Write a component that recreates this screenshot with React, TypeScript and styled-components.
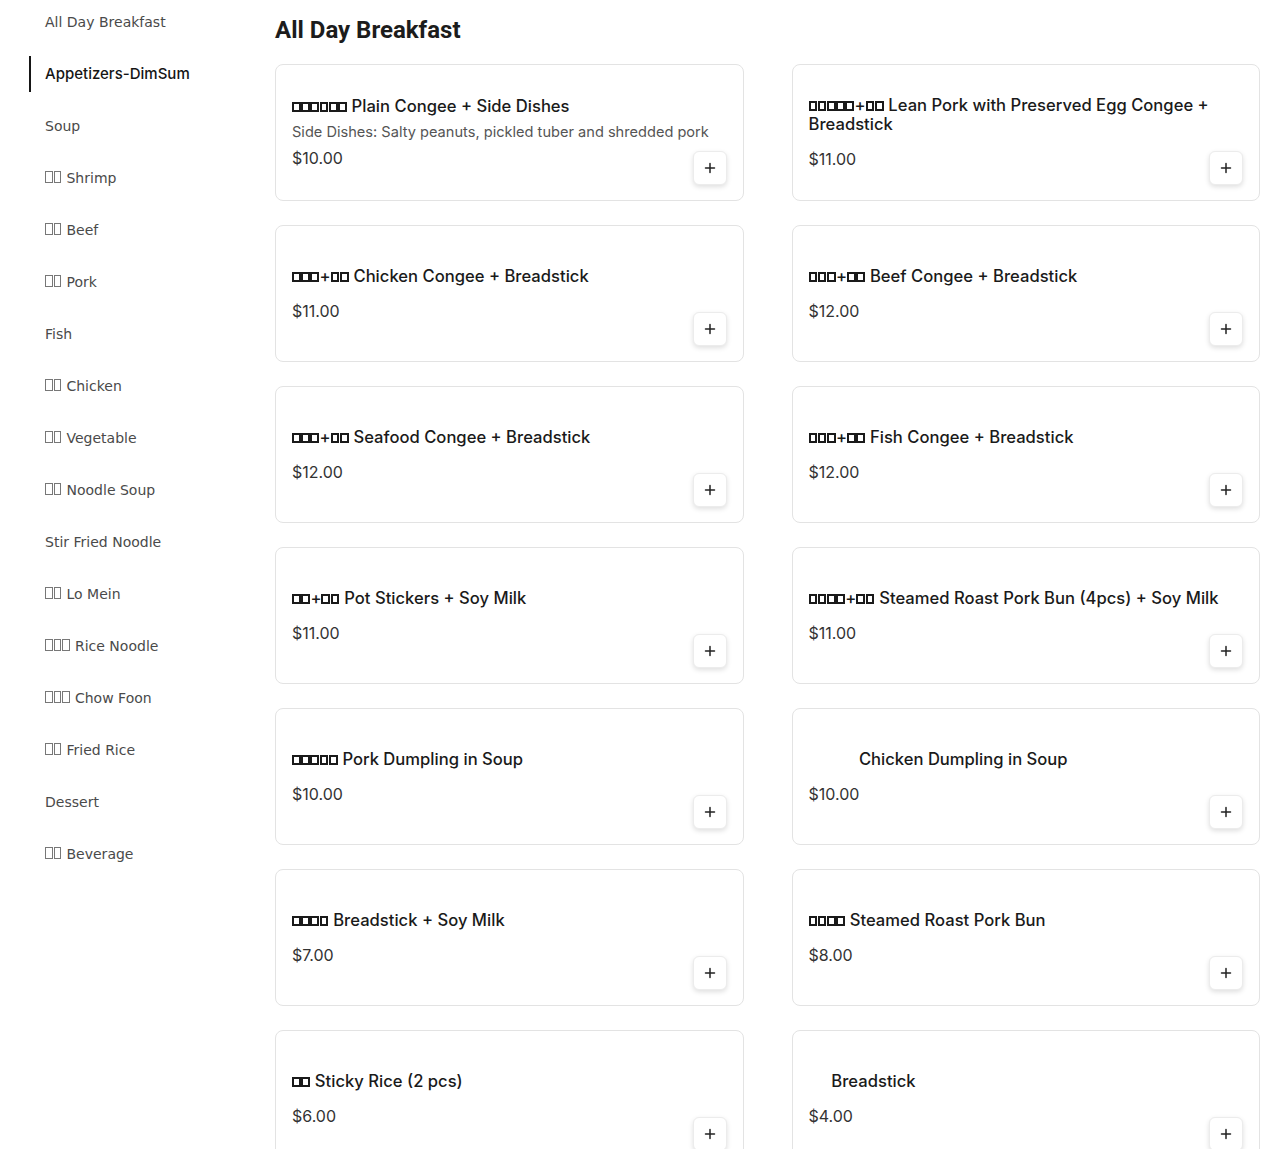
import React from "react";
import styled, { createGlobalStyle } from "styled-components";

const GlobalStyle = createGlobalStyle`
  html, body { margin: 0; padding: 0; background: #ffffff; }
  * { box-sizing: border-box; }
`;

const Page = styled.div`
  display: flex;
  align-items: flex-start;
  width: 1285px;
  min-height: 1149px;
`;

const Sidebar = styled.nav`
  width: 275px;
  flex: none;
  padding: 4px 0 0 29px;
  display: flex;
  flex-direction: column;
  gap: 16px;
`;

const NavItem = styled.a<{ $active?: boolean }>`
  display: block;
  height: 36px;
  padding: 0 0 0 14px;
  border-left: 2px solid ${(p) => (p.$active ? "#161616" : "transparent")};
  font-family: ${(p) => (p.$active ? `"Inter", "Noto Sans", sans-serif` : `"DejaVu Sans", sans-serif`)};
  font-size: ${(p) => (p.$active ? "15px" : "14px")};
  font-weight: ${(p) => (p.$active ? 500 : 400)};
  color: ${(p) => (p.$active ? "#151515" : "#4a4a4a")};
  line-height: 36px;
  text-decoration: none;
  white-space: nowrap;
  cursor: pointer;
`;

const Main = styled.main`
  flex: 1;
  padding-right: 25px;
`;

const Heading = styled.h2`
  margin: 16px 0 20px;
  font-family: "Roboto", "Liberation Sans", sans-serif;
  font-size: 24px;
  line-height: 28px;
  font-weight: 700;
  color: #1c1c1c;
`;

const Grid = styled.div`
  display: grid;
  grid-template-columns: 1fr 1fr;
  column-gap: 48px;
  row-gap: 24px;
`;

const Card = styled.div`
  position: relative;
  height: 137px;
  border: 1px solid #e3e3e3;
  border-radius: 8px;
  padding: 0 16px;
  display: flex;
  flex-direction: column;
  justify-content: center;
  background: #fff;
`;

const Title = styled.div`
  font-family: "Inter", "Noto Sans", sans-serif;
  font-size: 16.6px;
  font-weight: 500;
  line-height: 19px;
  color: #1a1a1a;
`;

const Desc = styled.div`
  margin-top: 6px;
  font-family: "Inter", "Noto Sans", sans-serif;
  font-size: 14.6px;
  line-height: 20px;
  font-weight: 400;
  color: #555;
  white-space: nowrap;
`;

const Price = styled.div<{ $tight?: boolean }>`
  margin-top: ${(p) => (p.$tight ? "6px" : "15px")};
  font-family: "Inter", "Noto Sans", sans-serif;
  font-size: 16px;
  line-height: 20px;
  font-weight: 400;
  color: #333;
`;

const AddButton = styled.button`
  position: absolute;
  right: 16px;
  bottom: 15px;
  width: 34px;
  height: 34px;
  padding: 0;
  border: 1px solid #ececec;
  border-radius: 6px;
  background: #fff;
  box-shadow: 0 2px 5px rgba(0, 0, 0, 0.13);
  display: flex;
  align-items: center;
  justify-content: center;
  cursor: pointer;
`;

const Tofu = styled.span<{ $kind: "bold" | "thin" | "blank" }>`
  display: inline-block;
  vertical-align: baseline;
  width: ${(p) => (p.$kind === "thin" ? "7.5px" : "8.8px")};
  height: ${(p) => (p.$kind === "thin" ? "12px" : "10px")};
  margin-right: ${(p) => (p.$kind === "thin" ? "1px" : "0.4px")};
  border: ${(p) =>
    p.$kind === "bold" ? "2px solid #1a1a1a" : p.$kind === "thin" ? "1px solid #777" : "2px solid transparent"};
`;

function Label({ text, kind }: { text: string; kind: "bold" | "thin" }) {
  return (
    <>
      {Array.from(text).map((ch, i) =>
        ch === "■" ? (
          <Tofu key={i} $kind={kind} />
        ) : ch === "○" ? (
          <Tofu key={i} $kind="blank" />
        ) : (
          <React.Fragment key={i}>{ch}</React.Fragment>
        )
      )}
    </>
  );
}

const PlusIcon = () => (
  <svg width="12" height="12" viewBox="0 0 12 12" aria-hidden="true">
    <path d="M6 1.5v9M1.5 6h9" stroke="#222" strokeWidth="1.5" strokeLinecap="round" />
  </svg>
);

const categories = [
  "All Day Breakfast",
  "Appetizers-DimSum",
  "Soup",
  "■■ Shrimp",
  "■■ Beef",
  "■■ Pork",
  "Fish",
  "■■ Chicken",
  "■■ Vegetable",
  "■■ Noodle Soup",
  "Stir Fried Noodle",
  "■■ Lo Mein",
  "■■■ Rice Noodle",
  "■■■ Chow Foon",
  "■■ Fried Rice",
  "Dessert",
  "■■ Beverage",
];

type Item = { name: string; desc?: string; price: string };

const items: Item[] = [
  { name: "■■■■■■ Plain Congee + Side Dishes", desc: "Side Dishes: Salty peanuts, pickled tuber and shredded pork", price: "$10.00" },
  { name: "■■■■■+■■ Lean Pork with Preserved Egg Congee + Breadstick", price: "$11.00" },
  { name: "■■■+■■ Chicken Congee + Breadstick", price: "$11.00" },
  { name: "■■■+■■ Beef Congee + Breadstick", price: "$12.00" },
  { name: "■■■+■■ Seafood Congee + Breadstick", price: "$12.00" },
  { name: "■■■+■■ Fish Congee + Breadstick", price: "$12.00" },
  { name: "■■+■■ Pot Stickers + Soy Milk", price: "$11.00" },
  { name: "■■■■+■■ Steamed Roast Pork Bun (4pcs) + Soy Milk", price: "$11.00" },
  { name: "■■■■■ Pork Dumpling in Soup", price: "$10.00" },
  { name: "○○○○○ Chicken Dumpling in Soup", price: "$10.00" },
  { name: "■■■■ Breadstick + Soy Milk", price: "$7.00" },
  { name: "■■■■ Steamed Roast Pork Bun", price: "$8.00" },
  { name: "■■ Sticky Rice (2 pcs)", price: "$6.00" },
  { name: "○○ Breadstick", price: "$4.00" },
];

export default function App() {
  return (
    <>
      <GlobalStyle />
      <Page>
        <Sidebar>
          {categories.map((c, i) => (
            <NavItem key={c} $active={i === 1}>
              <Label text={c} kind="thin" />
            </NavItem>
          ))}
        </Sidebar>
        <Main>
          <Heading>All Day Breakfast</Heading>
          <Grid>
            {items.map((it, i) => (
              <Card key={i}>
                <Title>
                  <Label text={it.name} kind="bold" />
                </Title>
                {it.desc && <Desc>{it.desc}</Desc>}
                <Price $tight={!!it.desc}>{it.price}</Price>
                <AddButton aria-label="Add">
                  <PlusIcon />
                </AddButton>
              </Card>
            ))}
          </Grid>
        </Main>
      </Page>
    </>
  );
}
